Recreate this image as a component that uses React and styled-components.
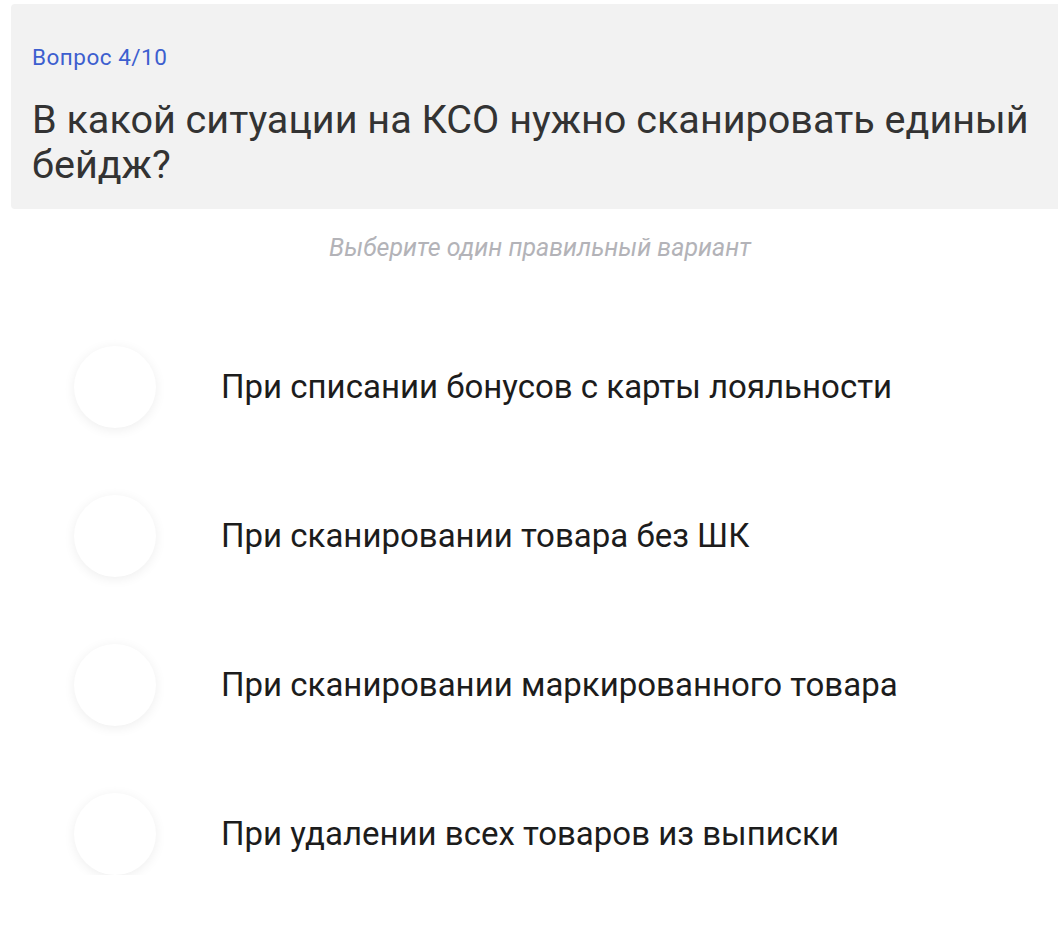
import styled, { createGlobalStyle } from "styled-components";

const GlobalStyle = createGlobalStyle`
  body {
    margin: 0;
    background: #fff;
    font-family: Roboto, "Noto Sans", sans-serif;
  }
`;

const options = [
  "При списании бонусов с карты лояльности",
  "При сканировании товара без ШК",
  "При сканировании маркированного товара",
  "При удалении всех товаров из выписки",
];

export default function App() {
  return (
    <Page>
      <GlobalStyle />
      <Card>
        <Counter>Вопрос 4/10</Counter>
        <Question>В какой ситуации на КСО нужно сканировать единый бейдж?</Question>
      </Card>
      <Hint>Выберите один правильный вариант</Hint>
      <List>
        {options.map((text) => (
          <Option key={text}>
            <Radio />
            <Label>{text}</Label>
          </Option>
        ))}
      </List>
    </Page>
  );
}

const Page = styled.div`
  width: 1058px;
  overflow: hidden;
  padding-top: 4px;
`;

const Card = styled.div`
  margin-left: 11px;
  background: #f2f2f2;
  border-radius: 4px 0 0 4px;
  padding: 40px 20px 22px 21px;
`;

const Counter = styled.div`
  font-size: 22.5px;
  line-height: 26px;
  letter-spacing: 0.5px;
  color: #3d5fcf;
`;

const Question = styled.div`
  margin-top: 27px;
  font-size: 39.6px;
  line-height: 45px;
  color: #333;
`;

const Hint = styled.div`
  margin-top: 25px;
  padding-left: 22px;
  text-align: center;
  font-size: 25px;
  line-height: 28px;
  font-style: italic;
  color: #b3b3b8;
`;

const List = styled.div`
  margin-top: 84px;
  display: flex;
  flex-direction: column;
  gap: 67px;
`;

const Option = styled.div`
  display: flex;
  align-items: center;
  gap: 65px;
  padding-left: 74px;
`;

const Radio = styled.div`
  width: 82px;
  height: 82px;
  flex-shrink: 0;
  border-radius: 50%;
  background: #fff;
  box-shadow: 0 2px 12px rgba(0, 0, 0, 0.07);
`;

const Label = styled.div`
  font-size: 33px;
  line-height: 40px;
  color: #1c1c1c;
`;
